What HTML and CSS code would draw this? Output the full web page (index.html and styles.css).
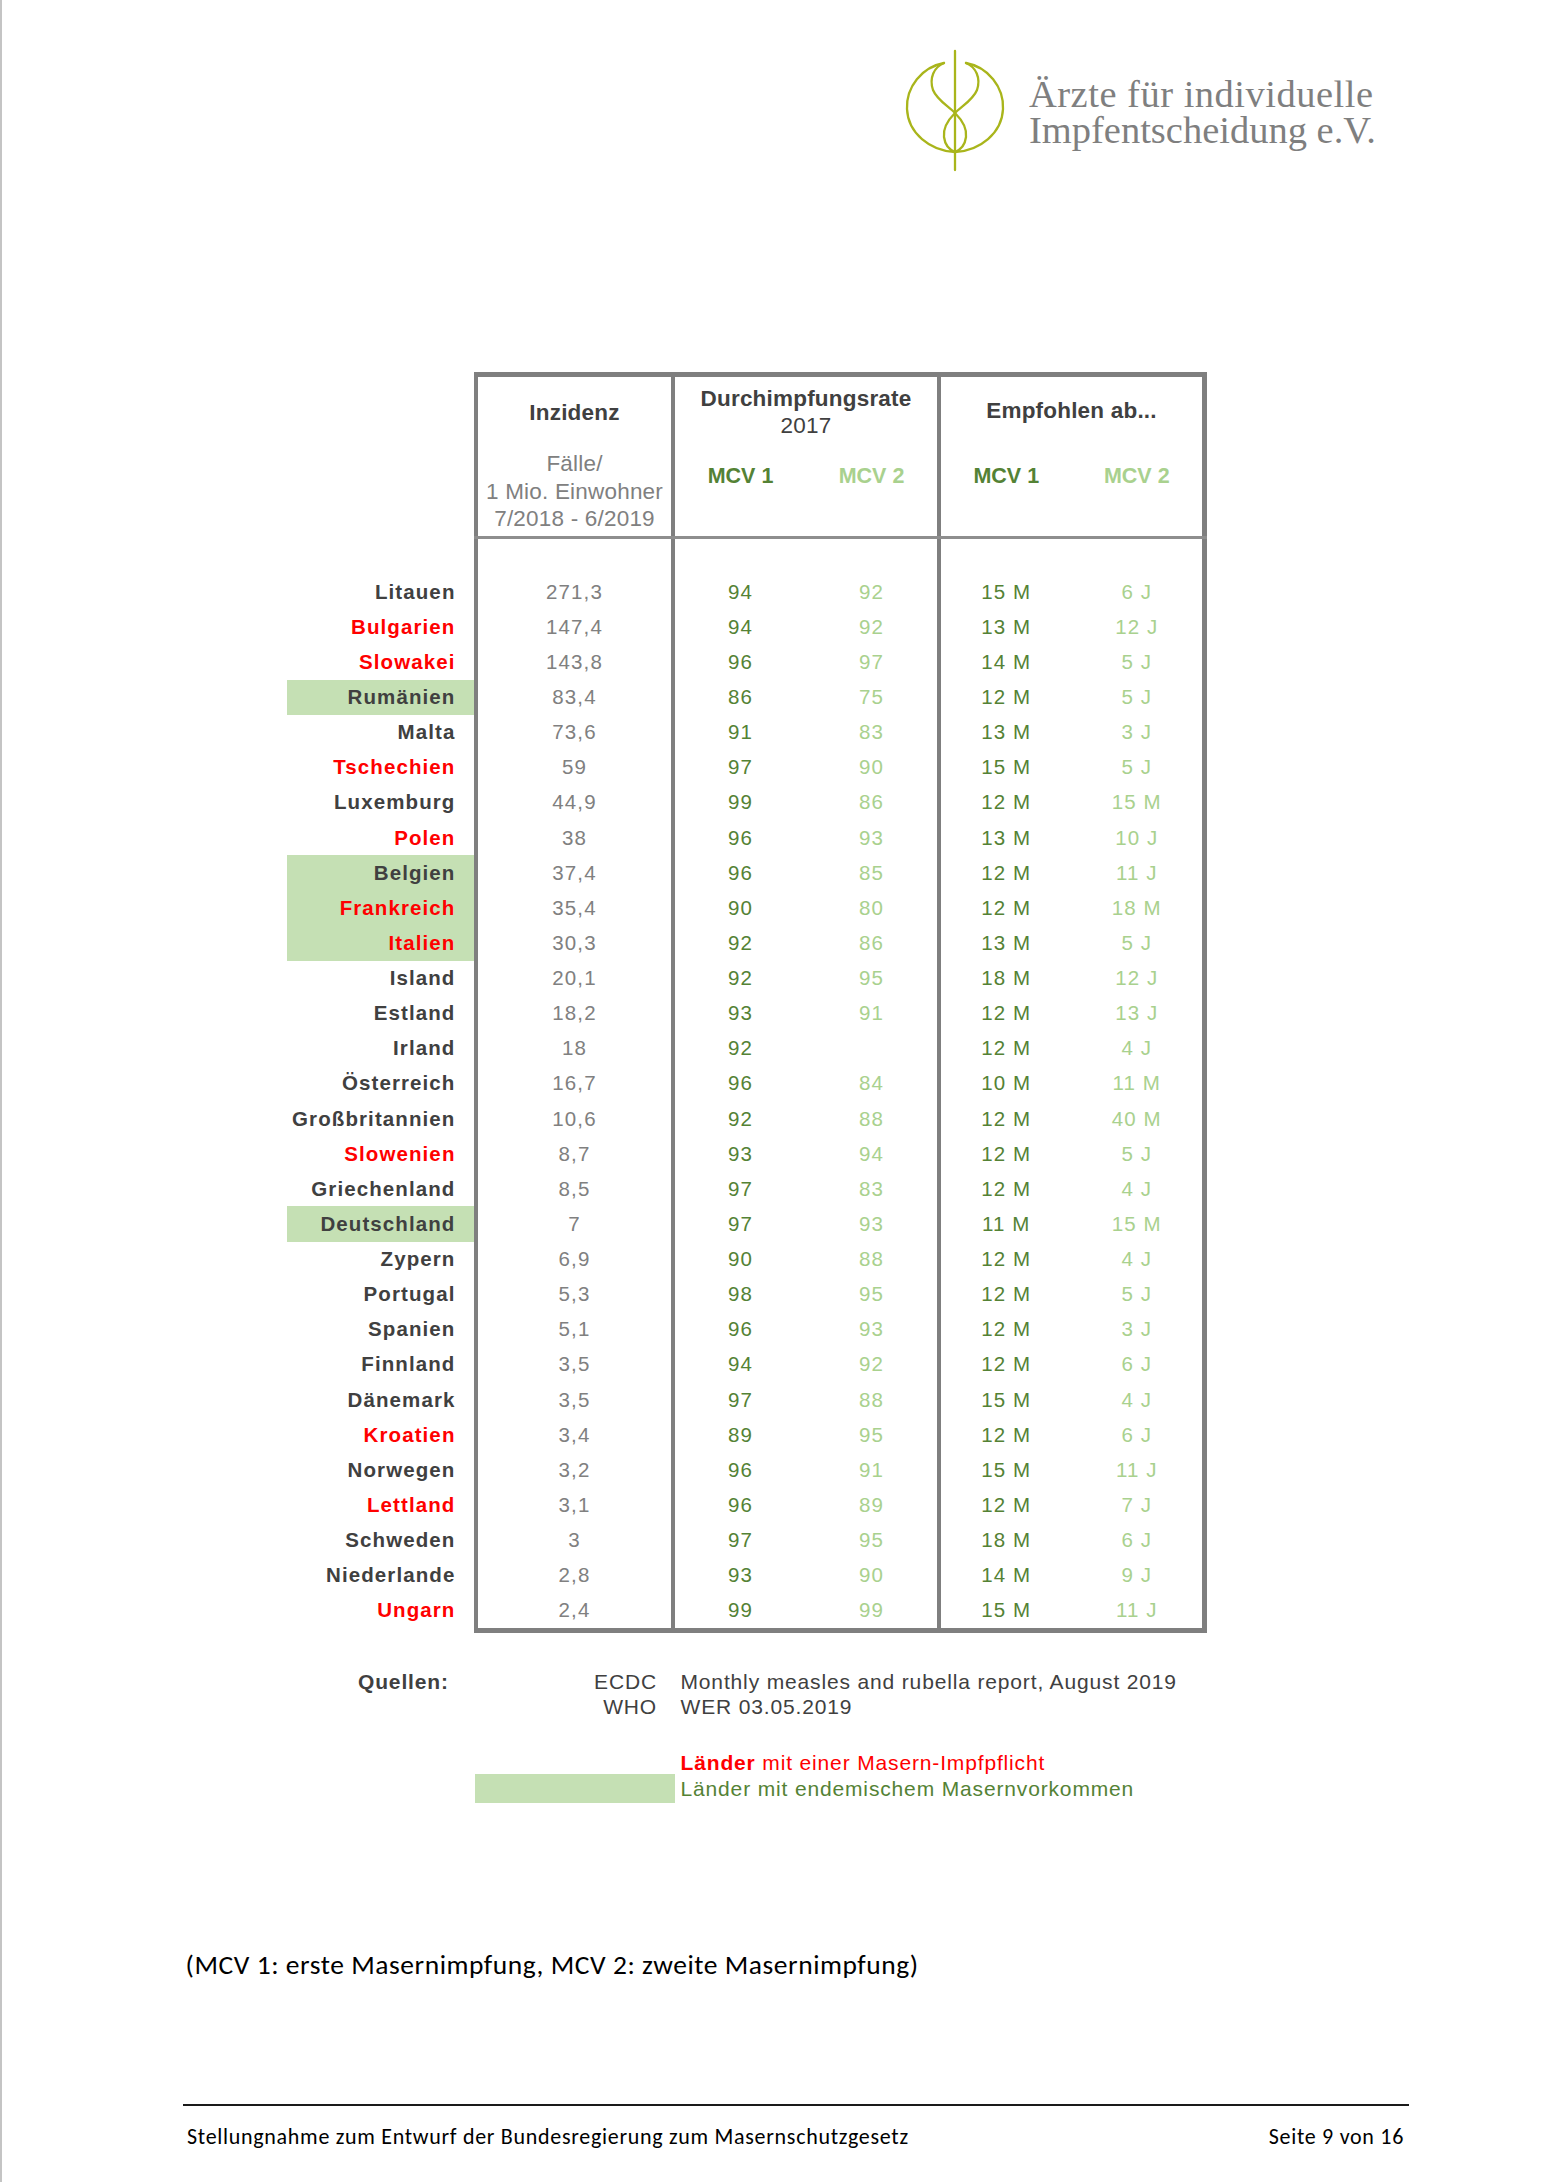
FILE: index.html
```html
<!DOCTYPE html>
<html lang="de">
<head>
<meta charset="utf-8">
<title>Stellungnahme – Seite 9</title>
<link rel="stylesheet" href="styles.css">
</head>
<body>
<div class="page">
  <div class="logo">
    <svg class="emblem" width="115" height="130" viewBox="0 0 115 130" aria-hidden="true">
      <g fill="none" stroke="#a9b51b" stroke-width="2.3" stroke-linecap="round">
        <line x1="55" y1="6" x2="55" y2="125"/>
        <path d="M44,18 C22,22 6,42 7,64 C8,88 30,106 55,107"/>
        <path d="M44,18 C34,22 29,33 33,45 C37,55 48,61 55,68 C63,76 67,84 66,92 C65,100 60,105 55,107"/>
        <g transform="translate(110,0) scale(-1,1)">
          <path d="M44,18 C22,22 6,42 7,64 C8,88 30,106 55,107"/>
          <path d="M44,18 C34,22 29,33 33,45 C37,55 48,61 55,68 C63,76 67,84 66,92 C65,100 60,105 55,107"/>
        </g>
      </g>
    </svg>
    <div class="logotext">
      <div class="l1">Ärzte für individuelle</div>
      <div class="l2">Impfentscheidung e.V.</div>
    </div>
  </div>

  <div class="tbl">
    <div class="hrow">
      <div class="hname"></div>
      <div class="hbox">
        <div class="h1">
          <div class="ht">Inzidenz</div>
          <div class="hsub">Fälle/<br>1 Mio. Einwohner<br>7/2018 - 6/2019</div>
        </div>
        <div class="h2">
          <div class="ht">Durchimpfungsrate</div>
          <div class="hyear">2017</div>
          <div class="mcv"><span class="m1">MCV 1</span><span class="m2">MCV 2</span></div>
        </div>
        <div class="h3">
          <div class="ht">Empfohlen ab...</div>
          <div class="mcv"><span class="m1">MCV 1</span><span class="m2">MCV 2</span></div>
        </div>
      </div>
    </div>

    <div class="row"><div class="name"></div><div class="c1"></div><div class="c2"></div><div class="c3"></div></div>

    <div class="row"><div class="name">Litauen</div><div class="c1">271,3</div><div class="c2"><span class="m1">94</span><span class="m2">92</span></div><div class="c3"><span class="m1">15 M</span><span class="m2">6 J</span></div></div>
    <div class="row"><div class="name red">Bulgarien</div><div class="c1">147,4</div><div class="c2"><span class="m1">94</span><span class="m2">92</span></div><div class="c3"><span class="m1">13 M</span><span class="m2">12 J</span></div></div>
    <div class="row"><div class="name red">Slowakei</div><div class="c1">143,8</div><div class="c2"><span class="m1">96</span><span class="m2">97</span></div><div class="c3"><span class="m1">14 M</span><span class="m2">5 J</span></div></div>
    <div class="row"><div class="name band">Rumänien</div><div class="c1">83,4</div><div class="c2"><span class="m1">86</span><span class="m2">75</span></div><div class="c3"><span class="m1">12 M</span><span class="m2">5 J</span></div></div>
    <div class="row"><div class="name">Malta</div><div class="c1">73,6</div><div class="c2"><span class="m1">91</span><span class="m2">83</span></div><div class="c3"><span class="m1">13 M</span><span class="m2">3 J</span></div></div>
    <div class="row"><div class="name red">Tschechien</div><div class="c1">59</div><div class="c2"><span class="m1">97</span><span class="m2">90</span></div><div class="c3"><span class="m1">15 M</span><span class="m2">5 J</span></div></div>
    <div class="row"><div class="name">Luxemburg</div><div class="c1">44,9</div><div class="c2"><span class="m1">99</span><span class="m2">86</span></div><div class="c3"><span class="m1">12 M</span><span class="m2">15 M</span></div></div>
    <div class="row"><div class="name red">Polen</div><div class="c1">38</div><div class="c2"><span class="m1">96</span><span class="m2">93</span></div><div class="c3"><span class="m1">13 M</span><span class="m2">10 J</span></div></div>
    <div class="row"><div class="name band">Belgien</div><div class="c1">37,4</div><div class="c2"><span class="m1">96</span><span class="m2">85</span></div><div class="c3"><span class="m1">12 M</span><span class="m2">11 J</span></div></div>
    <div class="row"><div class="name red band">Frankreich</div><div class="c1">35,4</div><div class="c2"><span class="m1">90</span><span class="m2">80</span></div><div class="c3"><span class="m1">12 M</span><span class="m2">18 M</span></div></div>
    <div class="row"><div class="name red band">Italien</div><div class="c1">30,3</div><div class="c2"><span class="m1">92</span><span class="m2">86</span></div><div class="c3"><span class="m1">13 M</span><span class="m2">5 J</span></div></div>
    <div class="row"><div class="name">Island</div><div class="c1">20,1</div><div class="c2"><span class="m1">92</span><span class="m2">95</span></div><div class="c3"><span class="m1">18 M</span><span class="m2">12 J</span></div></div>
    <div class="row"><div class="name">Estland</div><div class="c1">18,2</div><div class="c2"><span class="m1">93</span><span class="m2">91</span></div><div class="c3"><span class="m1">12 M</span><span class="m2">13 J</span></div></div>
    <div class="row"><div class="name">Irland</div><div class="c1">18</div><div class="c2"><span class="m1">92</span><span class="m2"></span></div><div class="c3"><span class="m1">12 M</span><span class="m2">4 J</span></div></div>
    <div class="row"><div class="name">Österreich</div><div class="c1">16,7</div><div class="c2"><span class="m1">96</span><span class="m2">84</span></div><div class="c3"><span class="m1">10 M</span><span class="m2">11 M</span></div></div>
    <div class="row"><div class="name">Großbritannien</div><div class="c1">10,6</div><div class="c2"><span class="m1">92</span><span class="m2">88</span></div><div class="c3"><span class="m1">12 M</span><span class="m2">40 M</span></div></div>
    <div class="row"><div class="name red">Slowenien</div><div class="c1">8,7</div><div class="c2"><span class="m1">93</span><span class="m2">94</span></div><div class="c3"><span class="m1">12 M</span><span class="m2">5 J</span></div></div>
    <div class="row"><div class="name">Griechenland</div><div class="c1">8,5</div><div class="c2"><span class="m1">97</span><span class="m2">83</span></div><div class="c3"><span class="m1">12 M</span><span class="m2">4 J</span></div></div>
    <div class="row"><div class="name band">Deutschland</div><div class="c1">7</div><div class="c2"><span class="m1">97</span><span class="m2">93</span></div><div class="c3"><span class="m1">11 M</span><span class="m2">15 M</span></div></div>
    <div class="row"><div class="name">Zypern</div><div class="c1">6,9</div><div class="c2"><span class="m1">90</span><span class="m2">88</span></div><div class="c3"><span class="m1">12 M</span><span class="m2">4 J</span></div></div>
    <div class="row"><div class="name">Portugal</div><div class="c1">5,3</div><div class="c2"><span class="m1">98</span><span class="m2">95</span></div><div class="c3"><span class="m1">12 M</span><span class="m2">5 J</span></div></div>
    <div class="row"><div class="name">Spanien</div><div class="c1">5,1</div><div class="c2"><span class="m1">96</span><span class="m2">93</span></div><div class="c3"><span class="m1">12 M</span><span class="m2">3 J</span></div></div>
    <div class="row"><div class="name">Finnland</div><div class="c1">3,5</div><div class="c2"><span class="m1">94</span><span class="m2">92</span></div><div class="c3"><span class="m1">12 M</span><span class="m2">6 J</span></div></div>
    <div class="row"><div class="name">Dänemark</div><div class="c1">3,5</div><div class="c2"><span class="m1">97</span><span class="m2">88</span></div><div class="c3"><span class="m1">15 M</span><span class="m2">4 J</span></div></div>
    <div class="row"><div class="name red">Kroatien</div><div class="c1">3,4</div><div class="c2"><span class="m1">89</span><span class="m2">95</span></div><div class="c3"><span class="m1">12 M</span><span class="m2">6 J</span></div></div>
    <div class="row"><div class="name">Norwegen</div><div class="c1">3,2</div><div class="c2"><span class="m1">96</span><span class="m2">91</span></div><div class="c3"><span class="m1">15 M</span><span class="m2">11 J</span></div></div>
    <div class="row"><div class="name red">Lettland</div><div class="c1">3,1</div><div class="c2"><span class="m1">96</span><span class="m2">89</span></div><div class="c3"><span class="m1">12 M</span><span class="m2">7 J</span></div></div>
    <div class="row"><div class="name">Schweden</div><div class="c1">3</div><div class="c2"><span class="m1">97</span><span class="m2">95</span></div><div class="c3"><span class="m1">18 M</span><span class="m2">6 J</span></div></div>
    <div class="row"><div class="name">Niederlande</div><div class="c1">2,8</div><div class="c2"><span class="m1">93</span><span class="m2">90</span></div><div class="c3"><span class="m1">14 M</span><span class="m2">9 J</span></div></div>
    <div class="row"><div class="name red">Ungarn</div><div class="c1">2,4</div><div class="c2"><span class="m1">99</span><span class="m2">99</span></div><div class="c3"><span class="m1">15 M</span><span class="m2">11 J</span></div></div>

    <div class="tbottom"></div>
  </div>

  <div class="sources">
    <div class="qlabel">Quellen:</div>
    <div class="src">ECDC</div>
    <div class="stext">Monthly measles and rubella report, August 2019</div>
    <div class="src">WHO</div>
    <div class="stext">WER 03.05.2019</div>
  </div>

  <div class="legend">
    <div class="lg-red"><b>Länder</b> mit einer Masern-Impfpflicht</div>
    <div class="lg-box"></div>
    <div class="lg-green">Länder mit endemischem Masernvorkommen</div>
  </div>

  <p class="note">(MCV 1: erste Masernimpfung, MCV 2: zweite Masernimpfung)</p>

  <div class="rule"></div>
  <div class="footer">
    <span>Stellungnahme zum Entwurf der Bundesregierung zum Masernschutzgesetz</span>
    <span>Seite 9 von 16</span>
  </div>
</div>
</body>
</html>
```

FILE: styles.css
```css
html, body {
  margin: 0;
  padding: 0;
  background: #ffffff;
}

.page {
  width: 1544px;
  min-height: 2182px;
  padding-top: 45px;
  box-sizing: border-box;
  background: linear-gradient(to right, #c4c4c4 2px, #ffffff 2px);
  font-family: "Liberation Sans", Arial, sans-serif;
}

/* ---------- Logo ---------- */
.logo {
  display: flex;
  margin-left: 900px;
}

.emblem {
  display: block;
  flex: none;
}

.logotext {
  margin-left: 14px;
  margin-top: 31px;
  font-family: "Liberation Serif", "Times New Roman", serif;
  font-size: 38.5px;
  line-height: 36px;
  color: #7f7f7f;
  white-space: nowrap;
}

.logotext .l1 { letter-spacing: 0.5px; }
.logotext .l2 { letter-spacing: 0px; }

/* ---------- Table ---------- */
.tbl {
  margin-top: 197px;
  margin-left: 287px;
  width: 920px;
}

.hrow {
  display: flex;
}

.hname {
  width: 187px;
  flex: none;
}

.hbox {
  display: flex;
  height: 167px;
  box-sizing: border-box;
  border-top: 5px solid #7f7f7f;
  border-bottom: 3px solid #8e8e8e;
  color: #404040;
  font-size: 22.5px;
  letter-spacing: 0.2px;
  text-align: center;
}

.h1, .h2, .h3 {
  box-sizing: border-box;
  border-left: 4px solid #7f7f7f;
  display: flex;
  flex-direction: column;
}

.h1 { width: 197px; padding-top: 21.5px; }
.h2 { width: 266px; padding-top: 7.8px; }
.h3 { width: 270px; padding-top: 19.8px; border-right: 5px solid #7f7f7f; }

.ht {
  font-weight: bold;
  line-height: 27px;
}

.hsub {
  margin-top: 24.5px;
  line-height: 27.5px;
  color: #808080;
}

.hyear {
  line-height: 27px;
}

.mcv {
  display: flex;
  font-weight: bold;
  font-size: 21.5px;
  letter-spacing: 0;
  line-height: 27px;
}

.h2 .mcv { margin-top: 24.2px; }
.h3 .mcv { margin-top: 39.2px; }

.mcv .m1, .mcv .m2 { flex: 1; }

.m1 { color: #548235; }
.m2 { color: #a9d18e; }

.row {
  display: flex;
  height: 35.14px;
  font-size: 20.5px;
  letter-spacing: 1.1px;
}

.name {
  width: 187px;
  flex: none;
  box-sizing: border-box;
  padding-right: 18.5px;
  display: flex;
  align-items: center;
  justify-content: flex-end;
  font-weight: bold;
  color: #404040;
  white-space: nowrap;
}

.name.red { color: #ff0000; }
.name.band { background: #c5e0b4; }

.c1, .c2, .c3 {
  box-sizing: border-box;
  border-left: 4px solid #7f7f7f;
  display: flex;
  align-items: center;
}

.c1 {
  width: 197px;
  justify-content: center;
  color: #808080;
}

.c2 { width: 266px; }
.c3 { width: 270px; border-right: 5px solid #7f7f7f; }

.c2 span, .c3 span {
  flex: 1;
  text-align: center;
}

.tbottom {
  margin-left: 187px;
  width: 733px;
  height: 5px;
  background: #7f7f7f;
}

/* ---------- Sources ---------- */
.sources {
  display: grid;
  grid-template-columns: 126.5px 149px auto;
  column-gap: 23.5px;
  margin-top: 36px;
  margin-left: 358px;
  font-size: 21px;
  letter-spacing: 0.85px;
  line-height: 25px;
  color: #404040;
}

.qlabel {
  font-weight: bold;
  grid-row: 1;
  grid-column: 1;
}

.src {
  grid-column: 2;
  text-align: right;
}

.stext {
  grid-column: 3;
  white-space: nowrap;
}

/* ---------- Legend ---------- */
.legend {
  display: grid;
  grid-template-columns: 200px auto;
  grid-template-rows: 26.7px 26.7px;
  column-gap: 5.5px;
  margin-top: 30.7px;
  margin-left: 475px;
  font-size: 21px;
  letter-spacing: 0.85px;
  line-height: 26.7px;
}

.lg-red {
  grid-column: 2;
  grid-row: 1;
  color: #ff0000;
  white-space: nowrap;
}

.lg-box {
  grid-column: 1;
  grid-row: 2;
  height: 29px;
  margin-top: -2.5px;
  background: #c5e0b4;
}

.lg-green {
  grid-column: 2;
  grid-row: 2;
  color: #548235;
  white-space: nowrap;
}

/* ---------- Note & footer ---------- */
.note {
  margin: 143.6px 0 0 185.6px;
  font-family: Carlito, Calibri, "Open Sans", sans-serif;
  font-size: 27.5px;
  letter-spacing: 0.55px;
  line-height: 36px;
  color: #000000;
}

.rule {
  margin-top: 121.5px;
  margin-left: 183px;
  width: 1226px;
  height: 2px;
  background: #1a1a1a;
}

.footer {
  display: flex;
  justify-content: space-between;
  margin-top: 15.5px;
  margin-left: 187px;
  width: 1217px;
  font-family: Carlito, Calibri, "Open Sans", sans-serif;
  font-size: 22px;
  letter-spacing: 0.7px;
  line-height: 30px;
  color: #000000;
}
```
